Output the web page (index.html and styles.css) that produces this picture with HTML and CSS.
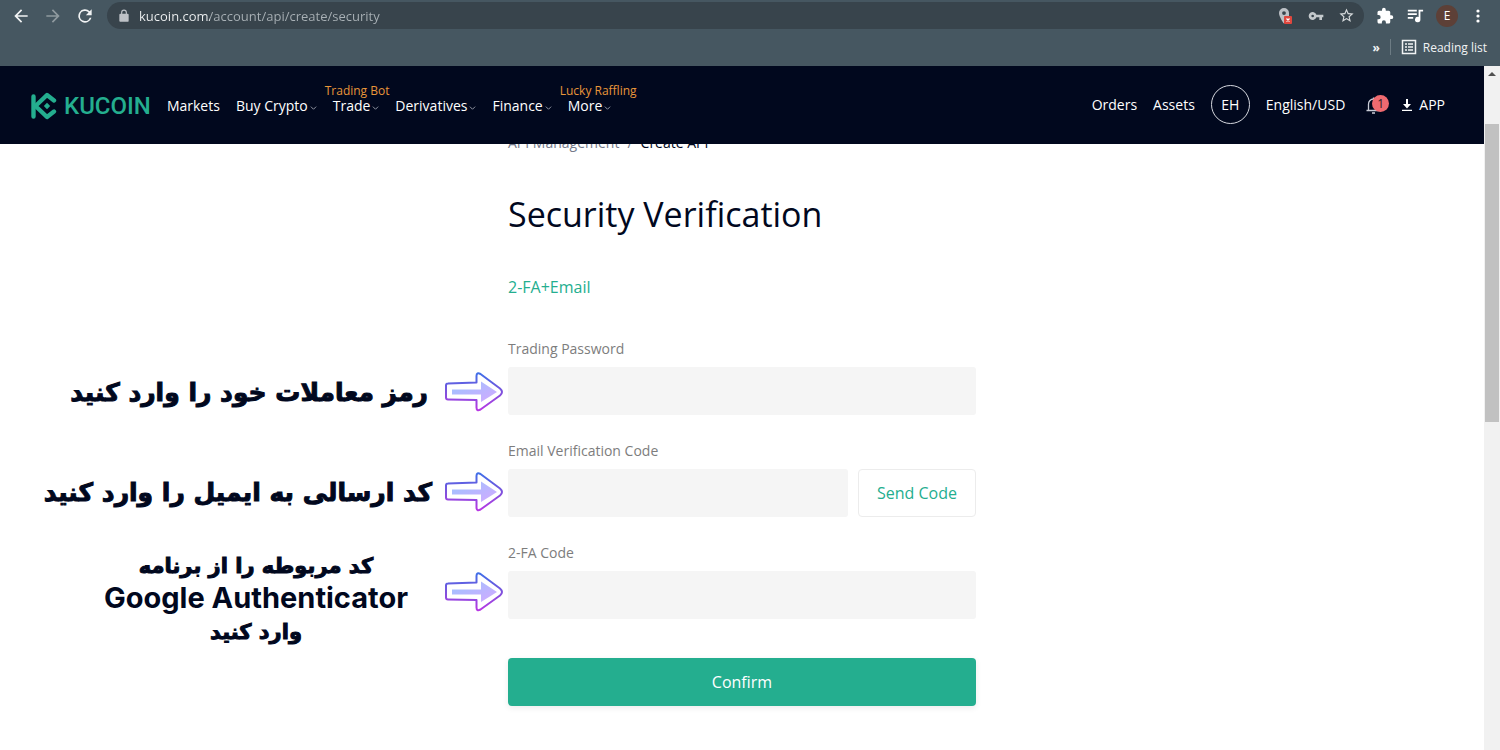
FILE: index.html
```html
<!DOCTYPE html>
<html lang="en">
<head>
  <meta charset="UTF-8">
  <meta name="viewport" content="width=device-width, initial-scale=1">
  <title>Security Verification</title>
  <link rel="stylesheet" href="styles.css">
</head>
<body>

  <!-- browser toolbar -->
  <div class="browser">
    <div class="browser-row">
      <button class="tool" type="button" aria-label="Back">
        <svg width="20" height="20" viewBox="0 0 24 24" fill="#f1f3f4"><path d="M20 11H7.800l5.600-5.600L12 4l-8 8 8 8 1.400-1.400L7.800 13H20z"/></svg>
      </button>
      <button class="tool" type="button" aria-label="Forward">
        <svg width="20" height="20" viewBox="0 0 24 24" fill="#8f9a9f"><path d="M12 4l-1.400 1.400 5.600 5.600H4v2h12.200l-5.600 5.600L12 20l8-8z"/></svg>
      </button>
      <button class="tool" type="button" aria-label="Reload">
        <svg width="20" height="20" viewBox="0 0 24 24" fill="#f1f3f4"><path d="M17.650 6.350A8 8 0 1 0 19.730 14h-2.080A6 6 0 1 1 12 6c1.660 0 3.140.690 4.220 1.780L13 11h7V4z"/></svg>
      </button>
      <div class="omnibox">
        <svg width="14" height="14" viewBox="0 0 24 24" fill="#bdc1c6"><path d="M18 8h-1V6A5 5 0 0 0 7 6v2H6a2 2 0 0 0-2 2v10c0 1.100.900 2 2 2h12a2 2 0 0 0 2-2V10a2 2 0 0 0-2-2zM9 8V6a3 3 0 0 1 6 0v2z"/></svg>
        <input class="url" type="text" aria-label="Address" value="kucoin.com/account/api/create/security">
        <svg width="18" height="18" viewBox="0 0 18 18"><path fill="#bdc1c6" fill-rule="evenodd" d="M8 1a5 5 0 0 0-5 5c0 3.500 4 9.500 5 10.500V14l1-5h4V6a5 5 0 0 0-5-5zm0 3.200a1.900 1.900 0 1 1 0 3.800 1.900 1.900 0 0 1 0-3.800z"/><rect x="8" y="9" width="8" height="8" rx="1" fill="#e0473e"/><path d="M10.500 11.500l3 3m0-3l-3 3" stroke="#fff" stroke-width="1.300"/></svg>
        <svg width="16" height="16" viewBox="0 0 24 24" fill="#c4c9cc"><path fill-rule="evenodd" d="M12.650 10A6 6 0 1 0 12.650 14H17v4h4v-4h2v-4zM7 14a2 2 0 1 1 0-4 2 2 0 0 1 0 4z"/></svg>
        <svg width="17" height="17" viewBox="0 0 24 24" fill="#d5d9db"><path d="M22 9.240l-7.190-.620L12 2 9.190 8.630 2 9.240l5.460 4.730L5.820 21 12 17.270 18.180 21l-1.630-7.030zM12 15.400l-3.760 2.270 1-4.280-3.320-2.880 4.380-.380L12 6.100l1.710 4.040 4.380.380-3.320 2.880 1 4.280z"/></svg>
      </div>
      <button class="tool" type="button" aria-label="Extensions">
        <svg width="18" height="18" viewBox="0 0 24 24" fill="#fff"><path d="M20.500 11H19V7a2 2 0 0 0-2-2h-4V3.500a2.500 2.500 0 0 0-5 0V5H4a2 2 0 0 0-2 2v3.800h1.500a2.700 2.700 0 0 1 0 5.400H2V20c0 1.100.900 2 2 2h3.800v-1.500a2.700 2.700 0 0 1 5.400 0V22H17a2 2 0 0 0 2-2v-4h1.500a2.500 2.500 0 0 0 0-5z"/></svg>
      </button>
      <button class="tool" type="button" aria-label="Media">
        <svg width="18" height="18" viewBox="0 0 20 20" fill="#fff"><path d="M2 3h10v2H2zM2 7h10v2H2zM2 11h6v2H2zM14 3h5v2h-3v9a3 3 0 1 1-2-2.800z"/></svg>
      </button>
      <button class="profile" type="button">E</button>
      <button class="tool" type="button" aria-label="Menu">
        <svg width="16" height="16" viewBox="0 0 16 16" fill="#fff"><circle cx="8" cy="3" r="1.600"/><circle cx="8" cy="8" r="1.600"/><circle cx="8" cy="13" r="1.600"/></svg>
      </button>
    </div>
    <div class="bookmarks">
      <button class="bookmark more" type="button">»</button>
      <span class="divider"></span>
      <button class="bookmark" type="button">
        <svg width="16" height="16" viewBox="0 0 16 16" fill="none" stroke="#f1f3f4" stroke-width="1.500"><rect x="1.500" y="1.500" width="13" height="13"/><path d="M4 5h2M7 5h5M4 8h2M7 8h5M4 11h2M7 11h5"/></svg>
        Reading list
      </button>
    </div>
  </div>

  <div class="viewport">
    <div class="page">

      <header class="header">
        <a class="logo" href="#">
          <svg width="27" height="28" viewBox="0 0 27 28" fill="none" stroke="#24ae8f" stroke-width="4.400" stroke-linecap="round" stroke-linejoin="round"><path d="M3.500 4.500v20M3.500 14h2"/><path d="M24 8.500L17 3 5.500 14 17 25l7-5.500"/><path fill="#24ae8f" stroke="none" d="M17 10.800l3.200 3.200-3.200 3.200-3.200-3.200z"/></svg>
          <span>KUCOIN</span>
        </a>
        <nav class="nav">
          <a href="#">Markets</a>
          <a href="#">Buy Crypto<svg class="caret" viewBox="0 0 8 8"><path d="M1 3l3 3 3-3"/></svg></a>
          <a href="#"><span class="tag">Trading Bot</span>Trade<svg class="caret" viewBox="0 0 8 8"><path d="M1 3l3 3 3-3"/></svg></a>
          <a href="#">Derivatives<svg class="caret" viewBox="0 0 8 8"><path d="M1 3l3 3 3-3"/></svg></a>
          <a href="#">Finance<svg class="caret" viewBox="0 0 8 8"><path d="M1 3l3 3 3-3"/></svg></a>
          <a href="#"><span class="tag">Lucky Raffling</span>More<svg class="caret" viewBox="0 0 8 8"><path d="M1 3l3 3 3-3"/></svg></a>
        </nav>
        <div class="account">
          <a href="#">Orders</a>
          <a href="#">Assets</a>
          <a class="avatar" href="#">EH</a>
          <a href="#">English/USD</a>
          <a class="bell" href="#" aria-label="Notifications">
            <svg width="20" height="20" viewBox="0 0 20 20" fill="none" stroke="#c9ccd6" stroke-width="1.300"><path d="M1.500 15.500h14M3.500 15.500V9a5 5 0 0 1 10 0v6.500M7 18h3M8.500 4V2.500"/></svg>
            <span class="count">1</span>
          </a>
          <a class="app" href="#">
            <svg width="12" height="14" viewBox="0 0 12 14" fill="#fff"><path d="M5 1h2v5h3l-4 4.500L2 6h3zM1 11.800h10V13H1z"/></svg>
            APP
          </a>
        </div>
      </header>

      <main class="main">
        <div class="intro">
          <div class="breadcrumb"><a href="#">API Management</a><span>/</span><span class="current">Create API</span></div>
          <h1>Security Verification</h1>
          <a class="method" href="#">2-FA+Email</a>
        </div>

        <!-- Persian hints, one for each field -->
        <aside class="notes">
          <div class="note">
            <p lang="fa" dir="rtl">رمز معاملات خود را وارد کنید</p>
            <svg class="arrow" viewBox="0 0 60 40">
              <defs>
                <linearGradient id="edge" x1="0" y1="0" x2="0" y2="1"><stop offset="0" stop-color="#3f6fe8"/><stop offset="0.500" stop-color="#7d52dc"/><stop offset="1" stop-color="#b838e4"/></linearGradient>
                <linearGradient id="fill" x1="0" y1="0" x2="1" y2="1"><stop offset="0" stop-color="#9cc4ff"/><stop offset="1" stop-color="#d3a9ff"/></linearGradient>
              </defs>
              <path fill="#fff" stroke="url(#edge)" stroke-width="2" stroke-linejoin="round" d="M4 11.500l28.500-1V4q0-4 4-2L56 16.500q4 3.500 0 7L36.500 37.500q-4 2-4-2V28L4 27.500q-2 0-2-2v-12q0-2 2-2z"/>
              <path fill="url(#fill)" d="M8 17.500h29V9.500L53 20 37 30v-7.500H8z"/>
            </svg>
          </div>
          <div class="note note-near">
            <p lang="fa" dir="rtl">کد ارسالی به ایمیل را وارد کنید</p>
            <svg class="arrow" viewBox="0 0 60 40">
              <path fill="#fff" stroke="url(#edge)" stroke-width="2" stroke-linejoin="round" d="M4 11.500l28.500-1V4q0-4 4-2L56 16.500q4 3.500 0 7L36.500 37.500q-4 2-4-2V28L4 27.500q-2 0-2-2v-12q0-2 2-2z"/>
              <path fill="url(#fill)" d="M8 17.500h29V9.500L53 20 37 30v-7.500H8z"/>
            </svg>
          </div>
          <div class="note note-stack">
            <p lang="fa" dir="rtl">کد مربوطه را از برنامه<br><span class="latin">Google Authenticator</span><br>وارد کنید</p>
            <svg class="arrow" viewBox="0 0 60 40">
              <path fill="#fff" stroke="url(#edge)" stroke-width="2" stroke-linejoin="round" d="M4 11.500l28.500-1V4q0-4 4-2L56 16.500q4 3.500 0 7L36.500 37.500q-4 2-4-2V28L4 27.500q-2 0-2-2v-12q0-2 2-2z"/>
              <path fill="url(#fill)" d="M8 17.500h29V9.500L53 20 37 30v-7.500H8z"/>
            </svg>
          </div>
        </aside>

        <form class="form">
          <div class="field">
            <label for="password">Trading Password</label>
            <input type="password" id="password">
          </div>
          <div class="field">
            <label for="email-code">Email Verification Code</label>
            <div class="field-row">
              <input type="text" id="email-code">
              <button class="send" type="button">Send Code</button>
            </div>
          </div>
          <div class="field">
            <label for="fa-code">2-FA Code</label>
            <input type="text" id="fa-code">
          </div>
          <button class="confirm" type="submit">Confirm</button>
        </form>
      </main>
    </div>

    <div class="scrollbar">
      <svg width="16" height="16" viewBox="0 0 16 16" fill="#505050"><path d="M4 10h8L8 6z"/></svg>
      <div class="thumb"></div>
    </div>
  </div>

</body>
</html>
```

FILE: styles.css
```css
* {
  box-sizing: border-box;
}

body {
  margin: 0;
  min-height: 100vh;
  display: flex;
  flex-direction: column;
  font-family: "Open Sans", "Noto Sans", sans-serif;
  color: #01081e;
  background: #fff;
}

a {
  color: inherit;
  text-decoration: none;
}

button {
  font-family: inherit;
  border: none;
  padding: 0;
  background: none;
  cursor: pointer;
}

svg {
  flex: none;
}

/* browser toolbar */
.browser {
  height: 66px;
  background: #465761;
}

.browser-row {
  display: flex;
  align-items: center;
  gap: 12px;
  height: 31px;
  padding: 0 14px 0 11px;
}

.tool {
  display: flex;
}

.omnibox {
  flex: 1;
  display: flex;
  align-items: center;
  gap: 14px;
  height: 27px;
  padding: 0 9px 0 10px;
  border-radius: 14px;
  background: #38444c;
}

/* domain is brighter than the path */
.url {
  flex: 1;
  min-width: 0;
  margin-left: -6px;
  padding: 0;
  border: none;
  outline: none;
  font-family: inherit;
  font-size: 13px;
  color: transparent;
  background: linear-gradient(to right, #f1f3f4 71px, #a9b1b6 71px);
  -webkit-background-clip: text;
  background-clip: text;
}

.profile {
  width: 22px;
  height: 22px;
  border-radius: 50%;
  font-size: 12px;
  color: #fff;
  background: #5d4037;
}

.bookmarks {
  display: flex;
  align-items: center;
  justify-content: flex-end;
  gap: 10px;
  height: 32px;
  padding-right: 13px;
}

.bookmark {
  display: flex;
  align-items: center;
  gap: 6px;
  font-size: 12px;
  color: #f1f3f4;
}

.more {
  font-weight: 700;
}

.divider {
  width: 1px;
  height: 16px;
  background: #6d7c84;
}

/* page and scrollbar */
.viewport {
  flex: 1;
  display: flex;
}

.page {
  flex: 1;
  min-width: 0;
}

.scrollbar {
  width: 16px;
  background: #f1f1f1;
}

.thumb {
  height: 298px;
  margin: 42px 1px 0;
  background: #c1c1c1;
}

.scrollbar svg {
  display: block;
}

/* site header */
.header {
  position: relative;
  z-index: 1;
  display: flex;
  align-items: center;
  height: 78px;
  padding: 2px 39px 0 30px;
  font-size: 14px;
  line-height: 16px;
  color: #fff;
  background: #01081e;
}

.logo {
  display: flex;
  align-items: center;
  gap: 7px;
  font-family: Roboto, sans-serif;
  font-size: 24px;
  font-weight: 500;
  line-height: 28px;
  color: #24ae8f;
}

.nav {
  display: flex;
  gap: 16px;
  margin-left: 16px;
}

.nav a {
  position: relative;
  white-space: nowrap;
}

.caret {
  width: 7px;
  height: 7px;
  margin-left: 2px;
  fill: none;
  stroke: #a3a7b3;
}

.tag {
  position: absolute;
  left: -8px;
  bottom: 100%;
  font-size: 12px;
  line-height: 14px;
  color: #e8963a;
}

.account {
  display: flex;
  align-items: center;
  gap: 16px;
  margin-left: auto;
  padding-bottom: 3px;
}

.avatar {
  display: flex;
  align-items: center;
  justify-content: center;
  width: 39px;
  height: 39px;
  border: 1px solid #d5d7de;
  border-radius: 50%;
}

.bell {
  position: relative;
  display: flex;
  width: 24px;
  margin-left: 4px;
}

.count {
  position: absolute;
  top: 0;
  right: 0;
  width: 17px;
  height: 17px;
  border-radius: 50%;
  font-size: 12px;
  line-height: 17px;
  text-align: center;
  color: #2b1a24;
  background: #ef6a70;
}

.app {
  display: flex;
  align-items: center;
  gap: 6px;
  margin-left: -4px;
}

/* three columns: hints, form, empty */
.main {
  display: grid;
  grid-template-columns: minmax(0, 1fr) 468px minmax(0, 1fr);
}

.intro {
  grid-column: 2;
  display: flex;
  flex-direction: column;
  align-items: flex-start;
  margin-top: -11px;
}

.breadcrumb {
  display: flex;
  gap: 8px;
  font-size: 14px;
  line-height: 20px;
  color: #74798a;
}

.current {
  color: #01081e;
}

h1 {
  margin: 37px 0 0;
  font-size: 34px;
  font-weight: 400;
  line-height: 48px;
}

.method {
  margin: 38px 0 40px;
  font-size: 16px;
  line-height: 22px;
  color: #24ae8f;
}

.notes {
  grid-column: 1;
  padding-top: 4px;
}

.note {
  display: flex;
  align-items: center;
  justify-content: flex-end;
  gap: 16px;
  height: 100px;
  padding-right: 4px;
}

.note-near {
  gap: 12px;
}

.note-stack {
  gap: 36px;
}

.note p {
  margin: 0;
  font-family: "DejaVu Sans", sans-serif;
  font-size: 25px;
  font-weight: 700;
  text-align: center;
  white-space: nowrap;
  -webkit-text-stroke: 1px #01081e;
}

.note-stack p {
  padding-top: 14px;
  font-size: 21px;
  line-height: 31px;
}

.note .latin {
  font-family: Inter, sans-serif;
  font-size: 29px;
  -webkit-text-stroke: 0;
}

.arrow {
  width: 60px;
  height: 40px;
}

.form {
  grid-column: 2;
}

.field {
  margin-bottom: 25px;
}

.field label {
  display: block;
  margin-bottom: 7px;
  font-size: 14px;
  line-height: 22px;
  color: #7d7d7d;
}

.field input {
  display: block;
  width: 100%;
  height: 48px;
  padding: 0 12px;
  border: none;
  border-radius: 3px;
  font-family: inherit;
  font-size: 16px;
  background: #f5f5f5;
}

.field-row {
  display: flex;
  gap: 10px;
}

.send {
  flex: none;
  width: 118px;
  border: 1px solid #ececec;
  border-radius: 4px;
  font-size: 16px;
  color: #24ae8f;
}

.confirm {
  width: 100%;
  height: 48px;
  margin-top: 14px;
  border-radius: 4px;
  font-size: 16px;
  color: #fff;
  background: #24ae8f;
  box-shadow: 0 2px 6px rgba(0, 0, 0, 0.08);
}
```
